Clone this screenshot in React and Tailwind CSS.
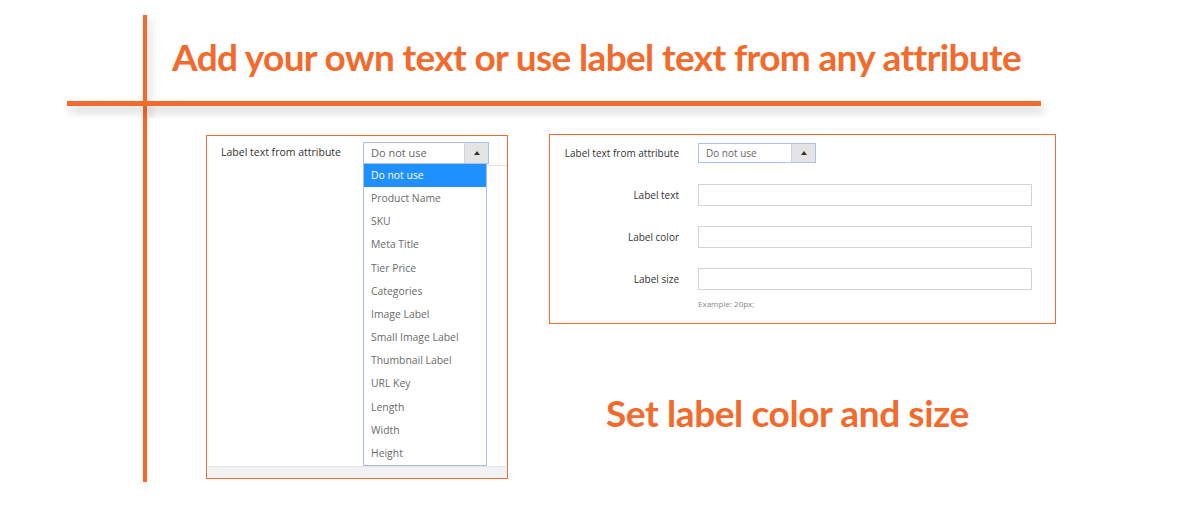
import React from "react";

const options = [
  "Do not use",
  "Product Name",
  "SKU",
  "Meta Title",
  "Tier Price",
  "Categories",
  "Image Label",
  "Small Image Label",
  "Thumbnail Label",
  "URL Key",
  "Length",
  "Width",
  "Height",
];

const SelectBox = ({ width, height, textSize }) => (
  <div className={`flex ${width} ${height} border border-[#a9c1ec] bg-white`}>
    <span className={`flex-1 pl-[7px] ${textSize} text-[#666] flex items-center`}>Do not use</span>
    <span className="w-[24px] bg-[#e4e4e4] border-l border-[#c9d3e6] flex items-center justify-center">
      <span className="w-0 h-0 border-l-[3px] border-r-[3px] border-b-[4px] border-l-transparent border-r-transparent border-b-[#333]" />
    </span>
  </div>
);

export default function App() {
  return (
    <div className="relative w-[1200px] h-[508px] overflow-hidden bg-white font-['Open_Sans',sans-serif]">
      {/* decorative cross lines */}
      <div className="absolute left-[143px] top-[15px] w-[4px] h-[467px] bg-[#f26a2c] shadow-[3px_4px_8px_rgba(0,0,0,0.18)]" />
      <div className="absolute left-[67px] top-[101px] w-[974px] h-[5px] bg-[#f26a2c] shadow-[3px_6px_9px_rgba(0,0,0,0.2)]" />

      <div className="relative h-[118px] pl-[172px] pt-[38px]">
        <h1 className="font-['Lato',sans-serif] font-bold text-[37px] leading-none text-[#f26a2c] tracking-[-0.65px]">
          Add your own text or use label text from any attribute
        </h1>
      </div>

      <div className="relative z-10 ml-[148px] h-[390px] bg-white pl-[58px] flex items-start gap-[41px]">
        {/* left panel: open dropdown */}
        <div className="mt-[17px] w-[302px] h-[344px] border border-[#f26a2c] flex flex-col">
          <div className="flex-1 pt-[6px]">
            <div className="flex items-start">
              <span className="w-[156px] pl-[14px] h-[22px] flex items-center text-[10.5px] font-medium text-[#333]">
                Label text from attribute
              </span>
              <div className="relative">
                <SelectBox width="w-[126px]" height="h-[22px]" textSize="text-[11px]" />
                <ul className="absolute left-0 top-full w-[124px] border-x border-b border-[#a9bde6] bg-white">
                  {options.map((o, i) => (
                    <li
                      key={o}
                      className={`h-[23.2px] px-[7px] flex items-center text-[10.4px] ${
                        i === 0 ? "bg-[#1e90ff] text-white" : "text-[#6b6b6b]"
                      }`}
                    >
                      {o}
                    </li>
                  ))}
                </ul>
              </div>
            </div>
            <div className="ml-[280px] mt-[1px] h-px bg-[#e3e3e3]" />
          </div>
          <div className="h-[12px] bg-[#f2f2f2] border-t border-[#e3e3e3] mx-[1px]" />
        </div>

        {/* right panel */}
        <div className="flex flex-col">
          <div className="mt-[16px] w-[507px] h-[190px] border border-[#f26a2c] pt-[8px]">
            <div className="flex items-center gap-[19px] h-[20px]">
              <span className="w-[129px] text-right text-[10px] font-medium text-[#333]">Label text from attribute</span>
              <SelectBox width="w-[118px]" height="h-[20px]" textSize="text-[10px]" />
            </div>
            {["Label text", "Label color", "Label size"].map((l, i) => (
              <div key={l} className={`flex items-center gap-[19px] h-[22px] ${i === 0 ? "mt-[21px]" : "mt-[20px]"}`}>
                <span className="w-[129px] text-right text-[10px] font-medium text-[#333]">{l}</span>
                <div className="w-[334px] h-[22px] border border-[#d4d4d4] bg-white" />
              </div>
            ))}
            <p className="ml-[148px] mt-[8px] text-[8px] text-[#888]">Example: 20px;</p>
          </div>
          <h2 className="ml-[57px] mt-[70px] font-['Lato',sans-serif] font-bold text-[37px] leading-none text-[#f26a2c] tracking-[-0.4px]">
            Set label color and size
          </h2>
        </div>
      </div>
    </div>
  );
}
